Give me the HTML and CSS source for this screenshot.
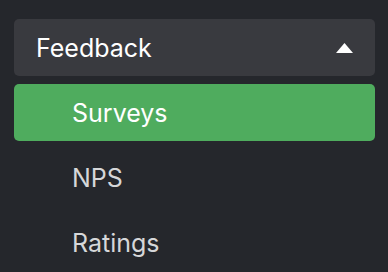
FILE: index.html
```html
<!DOCTYPE html>
<html>
<head>
<meta charset="utf-8">
<link rel="stylesheet" href="styles.css">
</head>
<body>
<nav class="menu">
  <div class="menu-header">
    <span class="menu-title">Feedback</span>
    <svg class="caret" width="17" height="10" viewBox="0 0 17 10"><polygon points="8.5,0 17,10 0,10" fill="#ffffff"/></svg>
  </div>
  <ul class="menu-list">
    <li class="menu-item active">Surveys</li>
    <li class="menu-item">NPS</li>
    <li class="menu-item">Ratings</li>
  </ul>
</nav>
</body>
</html>
```

FILE: styles.css
```css
html, body {
  margin: 0;
  padding: 0;
  background: #25272c;
}
body {
  font-family: Inter, "Noto Sans", sans-serif;
  padding: 19px 13px 0 14px;
}
.menu {
  display: flex;
  flex-direction: column;
  gap: 8px;
}
.menu-header {
  height: 57px;
  box-sizing: border-box;
  background: #393a3f;
  border-radius: 5px;
  display: flex;
  align-items: center;
  justify-content: space-between;
  padding: 0 22px;
  color: #ffffff;
  font-size: 25px;
}
.caret {
  display: block;
}
.menu-list {
  list-style: none;
  margin: 0;
  padding: 0;
  display: flex;
  flex-direction: column;
  gap: 8px;
}
.menu-item {
  height: 57px;
  box-sizing: border-box;
  display: flex;
  align-items: center;
  padding-left: 58px;
  border-radius: 5px;
  font-size: 25px;
  color: #d6d7d9;
}
.menu-item.active {
  background: #4fac5e;
  color: #ffffff;
}
```
